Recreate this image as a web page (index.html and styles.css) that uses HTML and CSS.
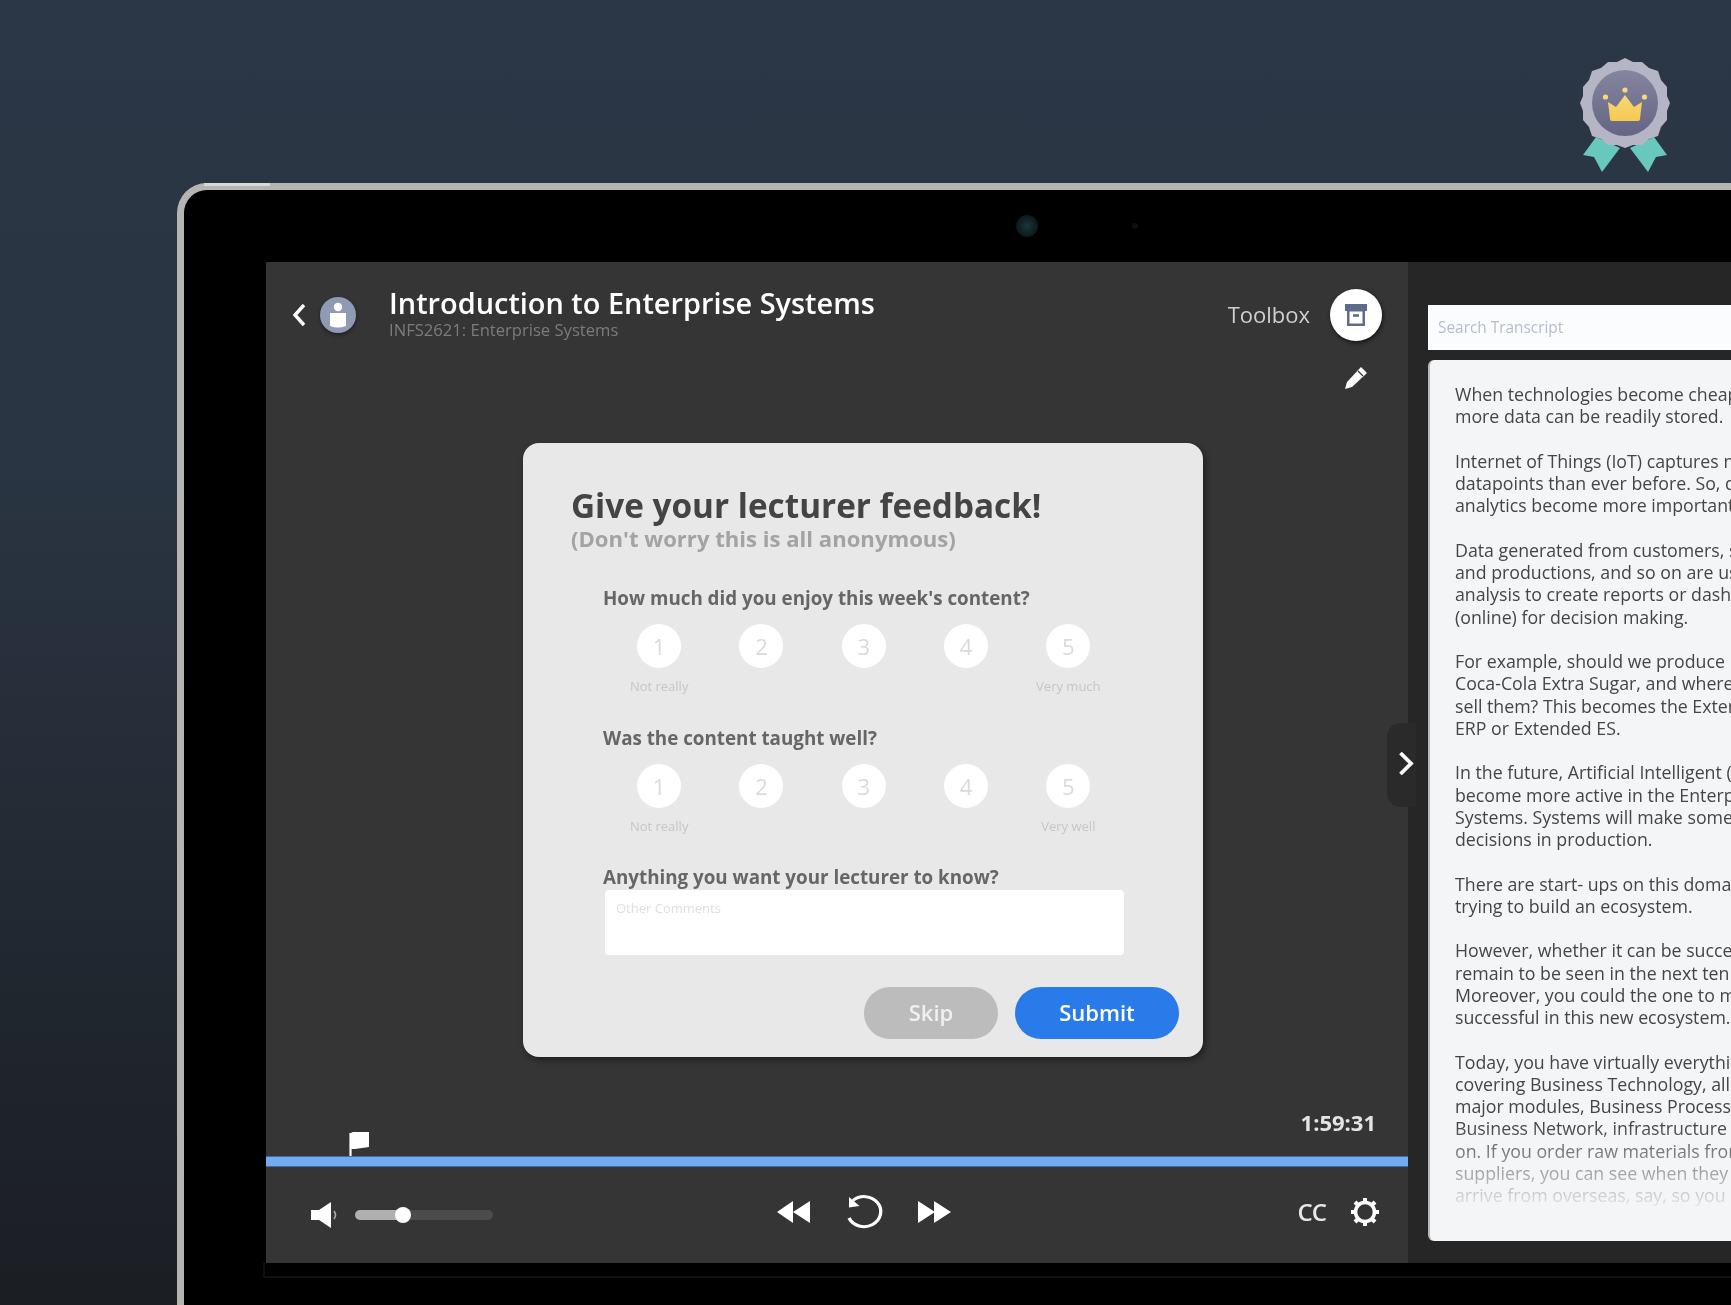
FILE: index.html
```html
<!DOCTYPE html>
<html lang="en">
<head>
  <meta charset="UTF-8">
  <title>Introduction to Enterprise Systems</title>
  <link rel="stylesheet" href="styles.css">
</head>
<body>

  <!-- Achievement badge -->
  <svg class="badge" viewBox="0 0 90 114" width="90" height="114">
    <defs>
      <linearGradient id="badgeInner" x1="0" y1="0" x2="0" y2="1">
        <stop offset="0" stop-color="#85859f"/>
        <stop offset="1" stop-color="#646583"/>
      </linearGradient>
      <linearGradient id="crownFill" x1="0" y1="0" x2="0" y2="1">
        <stop offset="0" stop-color="#f8d878"/>
        <stop offset="1" stop-color="#f6c850"/>
      </linearGradient>
    </defs>
    <path d="M16 79 L3 97 L14 99 L22 114 L40 90 Z M74 79 L87 97 L76 99 L68 114 L50 90 Z" fill="#69c8bd"/>
    <path d="M45 0 L53 4 L62 4 L69 10 L78 13 L81 22 L87 29 L87 38 L90 45 L87 53 L87 62 L81 69 L78 78 L69 81 L62 87 L53 87 L45 90 L37 87 L28 87 L21 81 L12 78 L9 69 L3 62 L3 53 L0 45 L3 38 L3 29 L9 22 L12 13 L21 10 L28 4 L37 4 Z" fill="#b5b5c5"/>
    <circle cx="45" cy="45" r="33" fill="url(#badgeInner)"/>
    <path d="M28 44 L36 49 L45 37 L54 49 L62 44 L60 61 Q60 63 58 63 L32 63 Q30 63 30 61 Z" fill="url(#crownFill)"/>
    <circle cx="45" cy="32" r="2.6" fill="#f8d878"/>
    <circle cx="25.5" cy="39" r="2.6" fill="#f8d878"/>
    <circle cx="64.5" cy="39" r="2.6" fill="#f8d878"/>
  </svg>

  <div class="laptop">
    <div class="bezel-top">
      <span class="camera"></span>
      <span class="sensor"></span>
    </div>

    <div class="screen">
      <!-- Video player -->
      <div class="player">
        <div class="header">
          <svg class="back" viewBox="0 0 14 24" width="14" height="24">
            <path d="M12 2 L3 12 L12 22" fill="none" stroke="#fff" stroke-width="3.4"/>
          </svg>
          <svg class="avatar" viewBox="0 0 36 36" width="36" height="36">
            <circle cx="18" cy="18" r="18" fill="#8f9bb5"/>
            <circle cx="18" cy="10" r="4.2" fill="#fff"/>
            <path d="M10 16 H26 V29 Q18 32 10 29 Z" fill="#fff"/>
          </svg>
          <div class="titles">
            <div class="course-title">Introduction to Enterprise Systems</div>
            <div class="course-code">INFS2621: Enterprise Systems</div>
          </div>
          <div class="toolbox-label">Toolbox</div>
          <div class="toolbox-btn">
            <svg viewBox="0 0 24 24" width="24" height="24">
              <path d="M1 1 H23 V8 H21 V23 H3 V8 H1 Z" fill="#5d6c8c"/>
              <path d="M5.5 8.5 H18.5 V20.5 H5.5 Z" fill="#fff"/>
              <path d="M9 12.5 H15" stroke="#5d6c8c" stroke-width="2.6"/>
            </svg>
          </div>
        </div>

        <div class="tools">
          <svg viewBox="0 0 24 24" width="24" height="24">
            <path d="M17 1 L23 7 L8 21 L1 23 L3 16 Z" fill="#fff"/>
            <path d="M14 5 L19 10" stroke="#353535" stroke-width="1.2"/>
          </svg>
        </div>

        <!-- Feedback popup -->
        <div class="modal">
          <h1 class="modal-title">Give your lecturer feedback!</h1>
          <div class="modal-sub">(Don't worry this is all anonymous)</div>

          <div class="question">
            <div class="question-text">How much did you enjoy this week's content?</div>
            <div class="rating">
              <div class="rate"><span class="circle">1</span><span class="rate-label">Not really</span></div>
              <div class="rate"><span class="circle">2</span></div>
              <div class="rate"><span class="circle">3</span></div>
              <div class="rate"><span class="circle">4</span></div>
              <div class="rate"><span class="circle">5</span><span class="rate-label">Very much</span></div>
            </div>
          </div>

          <div class="question">
            <div class="question-text">Was the content taught well?</div>
            <div class="rating">
              <div class="rate"><span class="circle">1</span><span class="rate-label">Not really</span></div>
              <div class="rate"><span class="circle">2</span></div>
              <div class="rate"><span class="circle">3</span></div>
              <div class="rate"><span class="circle">4</span></div>
              <div class="rate"><span class="circle">5</span><span class="rate-label">Very well</span></div>
            </div>
          </div>

          <div class="question-text comments-label">Anything you want your lecturer to know?</div>
          <div class="comments">Other Comments</div>

          <div class="modal-actions">
            <div class="btn btn-skip">Skip</div>
            <div class="btn btn-submit">Submit</div>
          </div>
        </div>

        <div class="timeline">
          <svg viewBox="0 0 21 24" width="21" height="24">
            <path d="M1.5 24 V1" stroke="#fff" stroke-width="2.2"/>
            <path d="M2 2 Q2 0 4 0 H20 V15 L6 17 H2 Z" fill="#fff"/>
          </svg>
          <div class="time">1:59:31</div>
        </div>
        <div class="progress"></div>

        <!-- Playback controls -->
        <div class="controls">
          <div class="volume">
            <svg viewBox="0 0 28 26" width="28" height="26">
              <path d="M0 8 H8 L20 0 V26 L8 18 H0 Z" fill="#fff"/>
              <path d="M23 9 Q26 13 23 17" fill="none" stroke="#aaa" stroke-width="1.6"/>
            </svg>
            <div class="slider"><div class="slider-fill"></div><div class="slider-knob"></div></div>
          </div>
          <div class="playback">
            <svg viewBox="0 0 34 24" width="34" height="24">
              <path d="M0 12 L16 1 V23 Z M16 12 L33 1 V23 Z" fill="#fff"/>
            </svg>
            <svg viewBox="0 0 36 36" width="40" height="36" preserveAspectRatio="none">
              <path d="M8 6.5 A15 15 0 1 1 4.5 24" fill="none" stroke="#fff" stroke-width="3"/>
              <path d="M4.5 3 L4.5 13.5 L14 12 Z" fill="#fff"/>
            </svg>
            <svg viewBox="0 0 34 24" width="34" height="24">
              <path d="M1 1 L18 12 L1 23 Z M17 1 L34 12 L17 23 Z" fill="#fff"/>
            </svg>
          </div>
          <div class="settings">
            <span class="cc">CC</span>
            <svg viewBox="0 0 30 30" width="30" height="30">
              <circle cx="15" cy="15" r="9.5" fill="none" stroke="#fff" stroke-width="3.6"/>
              <path d="M15 1 V6 M15 24 V29 M1 15 H6 M24 15 H29 M5 5 L8.5 8.5 M21.5 21.5 L25 25 M25 5 L21.5 8.5 M8.5 21.5 L5 25" stroke="#fff" stroke-width="4"/>
            </svg>
          </div>
        </div>

        <div class="collapse">
          <svg viewBox="0 0 16 25" width="16" height="25">
            <path d="M2.5 2 L13 12.5 L2.5 23" fill="none" stroke="#fff" stroke-width="3.8"/>
          </svg>
        </div>
      </div>

      <!-- Transcript -->
      <div class="sidebar">
        <div class="search">Search Transcript</div>
        <div class="transcript">
          <p>When technologies become cheaper,<br>more data can be readily stored.</p>
          <p>Internet of Things (IoT) captures more<br>datapoints than ever before. So, data<br>analytics become more important.</p>
          <p>Data generated from customers, sales<br>and productions, and so on are used in<br>analysis to create reports or dashboards<br>(online) for decision making.</p>
          <p>For example, should we produce more<br>Coca-Cola Extra Sugar, and where do we<br>sell them? This becomes the Extended<br>ERP or Extended ES.</p>
          <p>In the future, Artificial Intelligent (AI) will<br>become more active in the Enterprise<br>Systems. Systems will make some<br>decisions in production.</p>
          <p>There are start- ups on this domain<br>trying to build an ecosystem.</p>
          <p>However, whether it can be successful<br>remain to be seen in the next ten years.<br>Moreover, you could the one to make it<br>successful in this new ecosystem.</p>
          <p>Today, you have virtually everything<br>covering Business Technology, all the<br>major modules, Business Process,<br>Business Network, infrastructure and so<br>on. If you order raw materials from<br>suppliers, you can see when they<br>arrive from overseas, say, so you</p>
        </div>
      </div>
    </div>

    <div class="bezel-bottom"></div>
  </div>

</body>
</html>
```

FILE: styles.css
```css
body {
  margin: 0;
  height: 100vh;
  box-sizing: border-box;
  padding: 183px 0 0 177px;
  overflow: hidden;
  position: relative;
  background: linear-gradient(180deg, #2b3646 0%, #2a3543 35%, #1b1e23 100%);
  font-family: "Open Sans", sans-serif;
}

.badge {
  position: absolute;
  left: 1580px;
  top: 58px;
  filter: blur(0.6px);
}

/* Laptop frame */
.laptop {
  width: 1700px;
  height: 1200px;
  box-sizing: border-box;
  position: relative;
  background: #000;
  border-top: 7px solid #b4b4b1;
  border-left: 7px solid #b4b4b1;
  border-top-left-radius: 30px;
  filter: blur(0.6px);
}

/* Brighter edge next to the corner */
.laptop::before {
  content: "";
  position: absolute;
  top: -7px;
  left: 20px;
  width: 66px;
  height: 3px;
  background: #d8d8d8;
}

.bezel-top {
  height: 72px;
  display: flex;
  align-items: center;
  padding-left: 832px;
  gap: 94px;
}

.camera {
  width: 22px;
  height: 22px;
  border-radius: 50%;
  background: radial-gradient(circle, #17383c 0%, #0d1c20 60%, #050808 100%);
}

.sensor {
  width: 6px;
  height: 6px;
  border-radius: 50%;
  background: #0c1214;
}

.screen {
  margin-left: 82px;
  height: 1001px;
  display: flex;
}

.bezel-bottom {
  margin-left: 79px;
  height: 13px;
  border-bottom: 2px solid #101010;
  border-left: 2px solid #101010;
}

/* Player */
.player {
  width: 1142px;
  flex-shrink: 0;
  position: relative;
  display: flex;
  flex-direction: column;
  background: #353535;
}

.header {
  display: flex;
  align-items: center;
  height: 52px;
  padding: 27px 26px 0 26px;
}

.avatar {
  margin-left: 14px;
  filter: drop-shadow(0 2px 2px rgba(0, 0, 0, 0.4));
}

.titles {
  margin-left: 33px;
  flex: 1;
}

.course-title {
  color: #fff;
  font-size: 28.9px;
  font-weight: 600;
  line-height: 34px;
  margin-top: -4px;
}

.course-code {
  color: #7c7c7c;
  font-size: 16.6px;
  line-height: 20px;
}

.toolbox-label {
  color: #cfcfcf;
  font-size: 22px;
  margin: -2px 20px 0 0;
}

.toolbox-btn {
  width: 52px;
  height: 52px;
  border-radius: 50%;
  background: #fff;
  display: flex;
  align-items: center;
  justify-content: center;
  box-shadow: 1px 2px 4px rgba(0, 0, 0, 0.6);
}

.tools {
  display: flex;
  justify-content: flex-end;
  height: 24px;
  margin-top: 25px;
  padding-right: 40px;
}

/* Feedback popup */
.modal {
  width: 680px;
  height: 614px;
  box-sizing: border-box;
  margin: 53px 0 0 257px;
  padding: 42px 24px 0 48px;
  border-radius: 16px;
  background: #e8e8e8;
  box-shadow: 2px 3px 6px rgba(0, 0, 0, 0.45);
}

.modal-title {
  margin: 0;
  color: #444;
  font-size: 33.3px;
  font-weight: 700;
  line-height: 40px;
}

.modal-sub {
  color: #a3a3a3;
  font-size: 22.1px;
  font-weight: 700;
  line-height: 26px;
}

.question {
  margin: 34px 0 0 32px;
}

.question-text {
  color: #666;
  font-size: 18.8px;
  font-weight: 700;
  line-height: 26px;
}

.rating {
  display: grid;
  grid-template-columns: repeat(5, 102.3px);
  margin: 13px 0 0 5px;
}

.rate {
  display: flex;
  flex-direction: column;
  align-items: center;
}

.circle {
  width: 44px;
  height: 44px;
  border-radius: 50%;
  background: #fff;
  color: #dadada;
  font-size: 22px;
  line-height: 44px;
  text-align: center;
}

.rate-label {
  margin-top: 9px;
  color: #c6c6c6;
  font-size: 13px;
  line-height: 18px;
}

.question + .question {
  margin-top: 30px;
}

.comments-label {
  margin: 30px 0 0 32px;
  line-height: 25px;
}

.comments {
  width: 519px;
  height: 65px;
  box-sizing: border-box;
  margin-left: 34px;
  padding: 9px 11px;
  border-radius: 4px;
  background: #fff;
  color: #dedede;
  font-size: 13px;
  line-height: 18px;
}

.modal-actions {
  display: flex;
  justify-content: flex-end;
  gap: 17px;
  margin-top: 32px;
}

.btn {
  height: 52px;
  border-radius: 26px;
  color: #fff;
  font-size: 22px;
  font-weight: 600;
  line-height: 50px;
  text-align: center;
}

.btn-skip {
  width: 134px;
  background: #bcbcbc;
  color: #f0f0f0;
}

.btn-submit {
  width: 164px;
  background: #2a7bea;
}

/* Timeline */
.timeline {
  margin-top: auto;
  display: flex;
  justify-content: space-between;
  align-items: flex-end;
  padding: 0 32px 0 83px;
}

.time {
  color: #e4e4e4;
  font-size: 22px;
  font-weight: 700;
  line-height: 28px;
  margin-bottom: 20px;
}

.progress {
  height: 9px;
  background: #72aaf4;
  border-top: 1px solid #4a6a94;
  border-bottom: 1px solid #4a6a94;
}

.controls {
  height: 90px;
  padding-bottom: 6px;
  display: grid;
  grid-template-columns: 511px auto 1fr;
  align-items: center;
}

.volume {
  display: flex;
  align-items: center;
  gap: 16px;
  padding: 6px 0 0 45px;
}

.slider {
  width: 138px;
  height: 10px;
  border-radius: 5px;
  background: #4c4c4c;
  position: relative;
}

.slider-fill {
  width: 48px;
  height: 100%;
  border-radius: 5px;
  background: #b0b0b0;
}

.slider-knob {
  position: absolute;
  left: 40px;
  top: -3px;
  width: 16px;
  height: 16px;
  border-radius: 50%;
  background: #fff;
}

.playback {
  display: flex;
  align-items: center;
  gap: 33px;
}

.settings {
  display: flex;
  align-items: center;
  justify-content: flex-end;
  gap: 24px;
  padding-right: 28px;
}

.cc {
  color: #e8e8e8;
  font-size: 24px;
  font-weight: 600;
  line-height: 30px;
  letter-spacing: -1px;
}

.collapse {
  position: absolute;
  right: -8px;
  top: 461px;
  width: 29px;
  height: 84px;
  box-sizing: border-box;
  padding: 28px 0 0 11px;
  border-radius: 14px 0 0 14px;
  background: #2a2a2a;
}

/* Transcript */
.sidebar {
  flex: 1;
  padding: 43px 0 0 20px;
  background: #262626;
}

.search {
  height: 45px;
  padding-left: 10px;
  background: #fbfcfe;
  color: #b6bccc;
  font-size: 15.4px;
  line-height: 46px;
}

.transcript {
  height: 881px;
  box-sizing: border-box;
  margin-top: 10px;
  padding: 23px 0 0 25px;
  border-radius: 6px 0 0 6px;
  border-left: 2px solid #b9b9b9;
  background: #f4f5f7;
  color: #454545;
  font-size: 17.75px;
  line-height: 22.25px;
  white-space: nowrap;
  overflow: hidden;
  position: relative;
}

.transcript p {
  margin: 0 0 22.25px;
}

.transcript::after {
  content: "";
  position: absolute;
  left: 0;
  right: 0;
  bottom: 26px;
  height: 90px;
  background: linear-gradient(180deg, rgba(244, 245, 247, 0) 0%, rgba(244, 245, 247, 0.75) 75%, #f4f5f7 100%);
}
```
